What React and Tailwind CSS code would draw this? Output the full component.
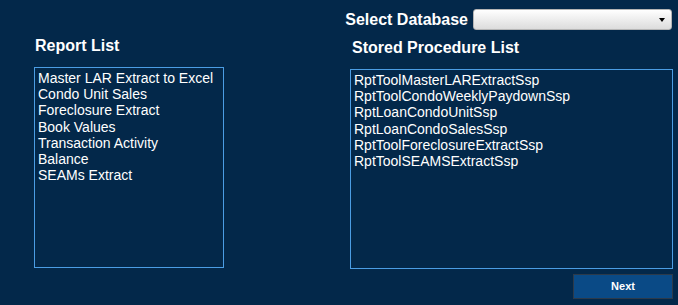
import React from "react";

const reports = [
  "Master LAR Extract to Excel",
  "Condo Unit Sales",
  "Foreclosure Extract",
  "Book Values",
  "Transaction Activity",
  "Balance",
  "SEAMs Extract",
];

const procs = [
  "RptToolMasterLARExtractSsp",
  "RptToolCondoWeeklyPaydownSsp",
  "RptLoanCondoUnitSsp",
  "RptLoanCondoSalesSsp",
  "RptToolForeclosureExtractSsp",
  "RptToolSEAMSExtractSsp",
];

function ListBox({ items, className }) {
  return (
    <div className={"border border-[#4b9de4] pl-[3px] pt-[2px] " + className}>
      {items.map((t) => (
        <div key={t} className="text-[14px] leading-[16.2px] text-white whitespace-nowrap">
          {t}
        </div>
      ))}
    </div>
  );
}

export default function App() {
  return (
    <div className="w-[678px] h-[305px] bg-[#03284a] text-white font-['Liberation_Sans',Arial,sans-serif] overflow-hidden">
      {/* database picker */}
      <div className="flex justify-end items-center pt-[9px] pr-[6px] gap-[5px]">
        <span className="text-[16px] font-bold leading-[21px]">Select Database</span>
        <div className="relative w-[199px] h-[21px] rounded-[3px] border border-[#b5b5b5] bg-gradient-to-b from-white to-[#dcdcdc]">
          <span className="absolute right-[6px] top-[8px] w-0 h-0 border-l-[3px] border-r-[3px] border-t-[4px] border-l-transparent border-r-transparent border-t-black" />
        </div>
      </div>

      <div className="flex">
        <div className="flex flex-col ml-[34px] mt-[7px] w-[190px]">
          <h2 className="text-[16px] font-bold leading-[18px] pl-[1px]">Report List</h2>
          <ListBox items={reports} className="mt-[12px] h-[201px]" />
        </div>

        <div className="flex flex-col ml-[126px] mt-[9px] w-[323px]">
          <h2 className="text-[16px] font-bold leading-[18px] pl-[2px]">Stored Procedure List</h2>
          <ListBox items={procs} className="mt-[12px] h-[200px]" />
          <div className="flex justify-end mt-[5px]">
            <button className="w-[100px] h-[25px] bg-[#0a4a86] border border-[#2c3a4a] text-[11px] font-bold text-white">
              Next
            </button>
          </div>
        </div>
      </div>
    </div>
  );
}
